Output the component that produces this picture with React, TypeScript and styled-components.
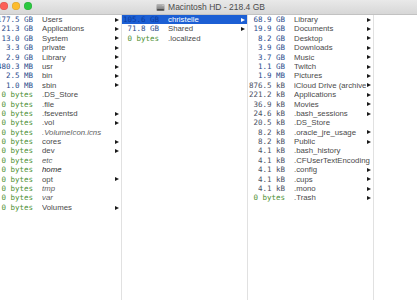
import React from 'react';
import styled, { createGlobalStyle } from 'styled-components';

type Entry = {
    size: string;
    name: string;
    dir?: boolean;
    style?: 'link' | 'alias';
};

const GlobalStyle = createGlobalStyle`
    html, body {
        margin: 0;
        padding: 0;
        background: #ffffff;
    }
    #root {
        height: 100vh;
    }
`

const Window = styled.div`
    height: 100vh;
    display: flex;
    flex-direction: column;
    overflow: hidden;
    background: #ffffff;
`

const TitleBar = styled.div`
    position: relative;
    height: 14px;
    flex-shrink: 0;
    display: flex;
    align-items: center;
    justify-content: center;
    padding-left: 4px;
    background: linear-gradient(#e9e9e9, #d7d7d7);
    border-bottom: 1px solid #c2c2c2;
`

const Lights = styled.div`
    position: absolute;
    left: 0;
    top: 2px;
    display: flex;
    gap: 4px;
`

const Light = styled.span<{ $color: string }>`
    width: 8px;
    height: 8px;
    border-radius: 50%;
    background: ${p => p.$color};
    box-shadow: inset 0 0 0 0.5px rgba(0, 0, 0, 0.15);
`

const Title = styled.div`
    display: flex;
    align-items: center;
    gap: 3px;
    font-family: "Liberation Sans", Arial, sans-serif;
    font-size: 8.5px;
    color: #4b4b4b;
    white-space: nowrap;
`

const Columns = styled.div`
    flex: 1;
    display: flex;
    margin-left: -4px;
`

const Column = styled.div`
    width: 125px;
    flex-shrink: 0;
    border-right: 1px solid #e1e1e1;
`

const Row = styled.div<{ $selected?: boolean }>`
    display: flex;
    align-items: center;
    height: 9.4px;
    padding-right: 2px;
    background: ${p => (p.$selected ? '#1c5fd4' : 'transparent')};
`

const Size = styled.span<{ $color: string }>`
    width: 37px;
    flex-shrink: 0;
    text-align: right;
    font-family: "DejaVu Sans Mono", "Liberation Mono", monospace;
    font-size: 7.5px;
    line-height: 9.4px;
    color: ${p => p.$color};
    white-space: nowrap;
`

const Name = styled.span<{ $selected?: boolean; $kind?: 'link' | 'alias' }>`
    flex: 1;
    min-width: 0;
    margin-left: 9px;
    overflow: hidden;
    white-space: nowrap;
    font-family: "Liberation Sans", Arial, sans-serif;
    font-size: 7.8px;
    line-height: 9.4px;
    font-style: ${p => (p.$kind ? 'italic' : 'normal')};
    color: ${p => (p.$selected ? '#ffffff' : p.$kind === 'alias' ? '#1e1e1e' : p.$kind === 'link' ? '#5e5e5e' : '#4a4a4a')};
`

const Arrow = styled.span<{ $selected?: boolean }>`
    width: 0;
    height: 0;
    flex-shrink: 0;
    margin-left: 1px;
    border-top: 2.5px solid transparent;
    border-bottom: 2.5px solid transparent;
    border-left: 4px solid ${p => (p.$selected ? '#ffffff' : '#1a1a1a')};
`

const col1: Entry[] = [
    { size: '177.5 GB', name: 'Users', dir: true },
    { size: '21.3 GB', name: 'Applications', dir: true },
    { size: '13.0 GB', name: 'System', dir: true },
    { size: '3.3 GB', name: 'private', dir: true },
    { size: '2.9 GB', name: 'Library', dir: true },
    { size: '480.3 MB', name: 'usr', dir: true },
    { size: '2.5 MB', name: 'bin', dir: true },
    { size: '1.0 MB', name: 'sbin', dir: true },
    { size: '0 bytes', name: '.DS_Store' },
    { size: '0 bytes', name: '.file' },
    { size: '0 bytes', name: '.fseventsd', dir: true },
    { size: '0 bytes', name: '.vol', dir: true },
    { size: '0 bytes', name: '.VolumeIcon.icns', style: 'link' },
    { size: '0 bytes', name: 'cores', dir: true },
    { size: '0 bytes', name: 'dev', dir: true },
    { size: '0 bytes', name: 'etc', style: 'link' },
    { size: '0 bytes', name: 'home', style: 'alias' },
    { size: '0 bytes', name: 'opt', dir: true },
    { size: '0 bytes', name: 'tmp', style: 'link' },
    { size: '0 bytes', name: 'var', style: 'link' },
    { size: '0 bytes', name: 'Volumes', dir: true },
];

const col2: Entry[] = [
    { size: '105.6 GB', name: 'christelle', dir: true },
    { size: '71.8 GB', name: 'Shared', dir: true },
    { size: '0 bytes', name: '.localized' },
];

const col3: Entry[] = [
    { size: '68.9 GB', name: 'Library', dir: true },
    { size: '19.9 GB', name: 'Documents', dir: true },
    { size: '8.2 GB', name: 'Desktop', dir: true },
    { size: '3.9 GB', name: 'Downloads', dir: true },
    { size: '3.7 GB', name: 'Music', dir: true },
    { size: '1.1 GB', name: 'Twitch', dir: true },
    { size: '1.9 MB', name: 'Pictures', dir: true },
    { size: '876.5 kB', name: 'iCloud Drive (archive)', dir: true },
    { size: '221.2 kB', name: 'Applications', dir: true },
    { size: '36.9 kB', name: 'Movies', dir: true },
    { size: '24.6 kB', name: '.bash_sessions', dir: true },
    { size: '20.5 kB', name: '.DS_Store' },
    { size: '8.2 kB', name: '.oracle_jre_usage', dir: true },
    { size: '8.2 kB', name: 'Public', dir: true },
    { size: '4.1 kB', name: '.bash_history' },
    { size: '4.1 kB', name: '.CFUserTextEncoding' },
    { size: '4.1 kB', name: '.config', dir: true },
    { size: '4.1 kB', name: '.cups', dir: true },
    { size: '4.1 kB', name: '.mono', dir: true },
    { size: '0 bytes', name: '.Trash', dir: true },
];

function sizeColor(size: string, selected: boolean) {
    if (selected) return '#0b3c9e';
    if (size.endsWith('bytes')) return '#4c8f33';
    if (size.endsWith('kB')) return '#4b5164';
    return '#2b4c8c';
}

function DiskIcon() {
    return (
        <svg width="9" height="9" viewBox="0 0 9 9">
            <defs>
                <linearGradient id="disk" x1="0" y1="0" x2="0" y2="1">
                    <stop offset="0" stopColor="#b9b9b9" />
                    <stop offset="1" stopColor="#6f6f6f" />
                </linearGradient>
            </defs>
            <rect x="0.5" y="1" width="8" height="7" rx="1" fill="url(#disk)" />
            <rect x="1.2" y="6" width="6.6" height="1.2" fill="#4a4a4a" />
            <circle cx="7" cy="2.2" r="0.5" fill="#e0e0e0" />
        </svg>
    );
}

function BrowserColumn({ entries, selected }: { entries: Entry[]; selected?: number }) {
    return (
        <Column>
            {entries.map((e, i) => {
                const sel = i === selected;
                return (
                    <Row key={e.name + i} $selected={sel}>
                        <Size $color={sizeColor(e.size, sel)}>{e.size}</Size>
                        <Name $selected={sel} $kind={e.style}>{e.name}</Name>
                        {e.dir && <Arrow $selected={sel} />}
                    </Row>
                );
            })}
        </Column>
    );
}

export default function App() {
    return (
        <Window>
            <GlobalStyle />
            <TitleBar>
                <Lights>
                    <Light $color="#fc5f57" />
                    <Light $color="#fdbc2e" />
                    <Light $color="#2bc840" />
                </Lights>
                <Title>
                    <DiskIcon />
                    Macintosh HD - 218.4 GB
                </Title>
            </TitleBar>
            <Columns>
                <BrowserColumn entries={col1} />
                <BrowserColumn entries={col2} selected={0} />
                <BrowserColumn entries={col3} />
            </Columns>
        </Window>
    );
}
